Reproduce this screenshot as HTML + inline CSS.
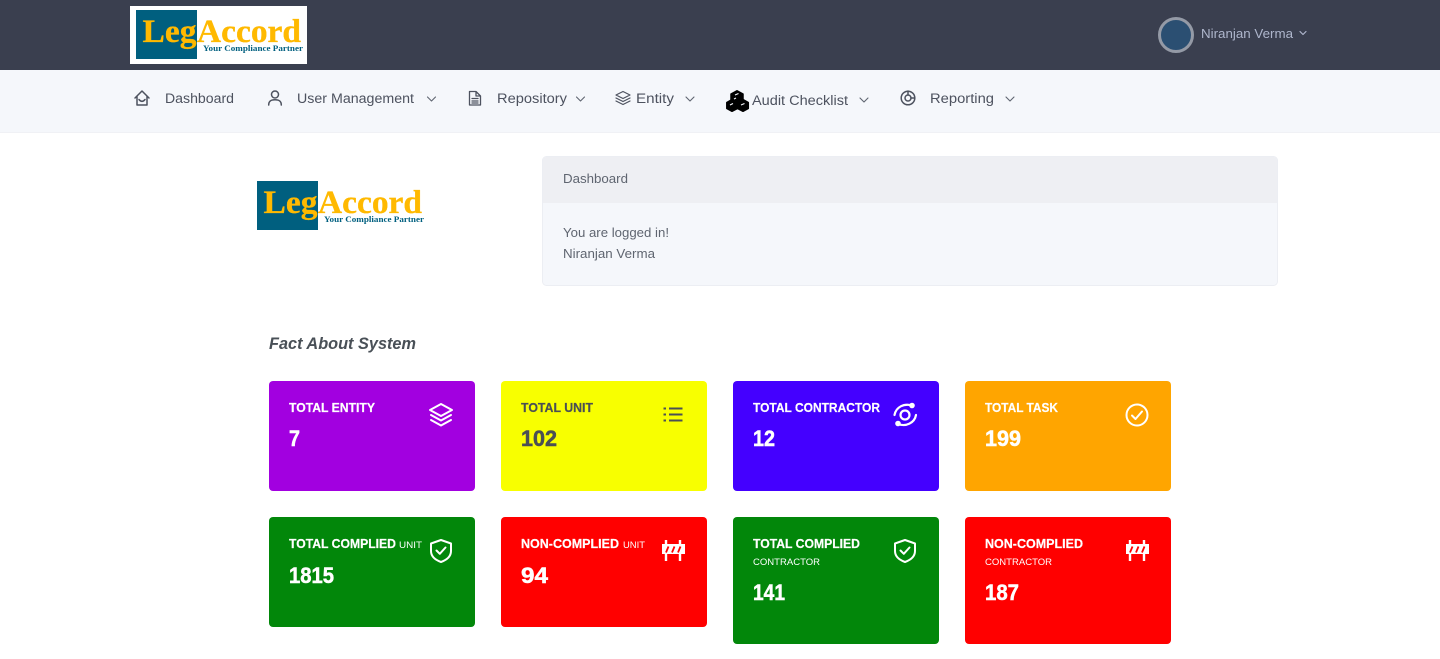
<!DOCTYPE html>
<html lang="en">
<head>
<meta charset="utf-8">
<title>LegAccord Dashboard</title>
<style>
html,body{margin:0;padding:0;background:#fff;width:1440px;height:659px;overflow:hidden}
svg{display:block}
text{font-family:"Liberation Sans",sans-serif}
.nav{font-size:13.5px;fill:#4d525f}
.gray{font-size:13px;fill:#5f6570}
.t{font-size:12.5px;font-weight:700;fill:#fff;stroke:#fff;stroke-width:.2px}
.s{font-size:9.5px;fill:#fff}
.v{font-size:22px;font-weight:700;fill:#fff;stroke:#fff;stroke-width:.5px}
.ic{fill:none;stroke:#fff;stroke-width:2;stroke-linecap:round;stroke-linejoin:round}
.ni{fill:none;stroke:#4d525f;stroke-width:1.5;stroke-linecap:round;stroke-linejoin:round}
.ch{fill:none;stroke:#5f6570;stroke-width:1.1;stroke-linecap:round;stroke-linejoin:round}
.serif{font-family:"Liberation Serif",serif;font-weight:700}
</style>
</head>
<body>
<svg width="1440" height="659" viewBox="0 0 1440 659" xmlns="http://www.w3.org/2000/svg">
  <defs>
    <g id="logo">
      <rect x="0" y="0" width="61" height="49" fill="#005f7f"/>
      <text class="serif" x="6.500" y="32" font-size="33" fill="#ffb900" stroke="#ffb900" stroke-width=".3" textLength="54" lengthAdjust="spacingAndGlyphs">Leg</text>
      <text class="serif" x="61" y="32" font-size="33" fill="#ffb900" stroke="#ffb900" stroke-width=".3" textLength="104" lengthAdjust="spacingAndGlyphs">Accord</text>
      <text class="serif" x="67" y="41" font-size="8.500" fill="#005f7f" textLength="100" lengthAdjust="spacingAndGlyphs">Your Compliance Partner</text>
    </g>
    <g id="shield" class="ic">
      <path d="M10 1 L20 4.500 V12 C20 17.500 15.500 21 10 23 C4.500 21 0 17.500 0 12 V4.500 Z"/>
      <path d="M5.500 11.500 L8.800 14.800 L14.500 8.500"/>
    </g>
    <g id="barrier">
      <path d="M5 0 V21 M19 0 V21" fill="none" stroke="#fff" stroke-width="2.400"/>
      <path d="M1 4 H24 V14 H1 Z" fill="#fff"/>
      <path d="M5 12.500 L7.500 6.500 M11 12.500 L13.500 6.500 M17 12.500 L19.500 6.500" stroke="#ff0000" stroke-width="1.800" fill="none"/>
    </g>
  </defs>

  <!-- Top bar -->
  <rect x="0" y="0" width="1440" height="70" fill="#3a3f4f"/>
  <rect x="130" y="6" width="177" height="58" fill="#fff"/>
  <use href="#logo" x="136" y="10"/>
  <circle cx="1176" cy="35" r="16.500" fill="#2b4f72" stroke="#949aa6" stroke-width="3"/>
  <text x="1201" y="38" font-size="13" fill="#aeb6cc" textLength="92" lengthAdjust="spacingAndGlyphs">Niranjan Verma</text>
  <path d="M1300 31.500 L1303 34.500 L1306 31.500" fill="none" stroke="#aeb6cc" stroke-width="1.200" stroke-linecap="round" stroke-linejoin="round"/>

  <!-- Nav -->
  <rect x="0" y="70" width="1440" height="63" fill="#f5f7fb"/>
  <rect x="0" y="132" width="1440" height="1" fill="#f0f1f5"/>

  <g class="ni">
    <path d="M135 98 L142 91 L149 98 M137 96.500 V105 H147 V96.500"/>
    <path d="M139 99.500 C141 102 143 102 145 99.500"/>
    <circle cx="275" cy="94.500" r="3.500"/>
    <path d="M268.700 105 C268.700 101 271 99.800 275 99.800 C279 99.800 281.300 101 281.300 105"/>
    <path d="M469.500 91.500 H476 L480.500 96 V105 H469.500 Z M476 91.500 V96 H480.500 M472 98.500 H478 M472 101 H478 M472 103 H478" stroke-width="1.300"/>
    <path d="M623 91.500 L630 95 L623 98.500 L616 95 Z M616 98 L623 101.500 L630 98 M616 101 L623 104.500 L630 101" stroke-width="1.200"/>
    <circle cx="908" cy="98" r="6.800"/>
    <circle cx="908" cy="98" r="3"/>
    <path d="M908 91 V95 M911 98 H914.500"/>
  </g>
  <g fill="#000" stroke="#000" stroke-width="1.500" stroke-linejoin="round">
    <path d="M737 90.800 L743 94 V100 L737 103 L731 100 V94 Z"/>
    <path d="M732 99.500 L737.500 102.500 V108.500 L732 111.300 L726.800 108.500 V102.500 Z"/>
    <path d="M743 99.500 L748.300 102.500 V108.500 L743 111.300 L737.500 108.500 V102.500 Z"/>
  </g>
  <g stroke="#f5f7fb" stroke-width="1.200" fill="none">
    <path d="M735 95 L738.500 93.500 M730 105 L733 103.500 M741 105 L744.500 103.500 M734 99 L736 98"/>
  </g>

  <text class="nav" x="165" y="103" textLength="69" lengthAdjust="spacingAndGlyphs">Dashboard</text>
  <text class="nav" x="297" y="103" textLength="117" lengthAdjust="spacingAndGlyphs">User Management</text>
  <text class="nav" x="497" y="103" textLength="70" lengthAdjust="spacingAndGlyphs">Repository</text>
  <text class="nav" x="636" y="103" textLength="38" lengthAdjust="spacingAndGlyphs">Entity</text>
  <text class="nav" x="752" y="105" textLength="96" lengthAdjust="spacingAndGlyphs">Audit Checklist</text>
  <text class="nav" x="930" y="103" textLength="64" lengthAdjust="spacingAndGlyphs">Reporting</text>

  <g class="ch">
    <path d="M427.500 97 L431.500 101 L435.500 97"/>
    <path d="M576.500 97 L580.500 101 L584.500 97"/>
    <path d="M686 97 L690 101 L694 97"/>
    <path d="M860 98 L864 102 L868 98"/>
    <path d="M1006 97 L1010 101 L1014 97"/>
  </g>

  <!-- Second logo -->
  <use href="#logo" x="257" y="181"/>

  <!-- Panel -->
  <rect x="542.500" y="156.500" width="735" height="129" rx="4" fill="#f5f7fb" stroke="#eceef3"/>
  <path d="M543 203 V160 A3.500 3.500 0 0 1 546.500 157 H1273.500 A3.500 3.500 0 0 1 1277 160 V203 Z" fill="#eeeff3"/>
  <text class="gray" x="563" y="183" textLength="65" lengthAdjust="spacingAndGlyphs">Dashboard</text>
  <text class="gray" x="563" y="237" textLength="106" lengthAdjust="spacingAndGlyphs">You are logged in!</text>
  <text class="gray" x="563" y="258" textLength="92" lengthAdjust="spacingAndGlyphs">Niranjan Verma</text>

  <text x="269" y="349" font-size="16.500" font-weight="700" font-style="italic" fill="#495057" textLength="147" lengthAdjust="spacingAndGlyphs">Fact About System</text>

  <!-- Cards row 1 -->
  <rect x="269" y="381" width="206" height="110" rx="4" fill="#a200e0"/>
  <rect x="501" y="381" width="206" height="110" rx="4" fill="#f8ff00"/>
  <rect x="733" y="381" width="206" height="110" rx="4" fill="#4400ff"/>
  <rect x="965" y="381" width="206" height="110" rx="4" fill="#ffa500"/>

  <text class="t" x="289" y="412" textLength="86" lengthAdjust="spacingAndGlyphs">TOTAL ENTITY</text>
  <text class="v" x="289" y="446" textLength="11" lengthAdjust="spacingAndGlyphs">7</text>
  <path class="ic" d="M441 404 L452 410 L441 416 L430 410 Z M431 415 L441 420.500 L451 415 M431 420 L441 425.500 L451 420"/>

  <text class="t" x="521" y="412" textLength="72" lengthAdjust="spacingAndGlyphs" style="fill:#4a4f55;stroke:#4a4f55">TOTAL UNIT</text>
  <text class="v" x="521" y="446" textLength="36" lengthAdjust="spacingAndGlyphs" style="fill:#4a4f55;stroke:#4a4f55">102</text>
  <path d="M669 408.500 H682.500 M669 414.500 H682.500 M669 420.500 H682.500 M663.500 408.500 H666 M663.500 414.500 H666 M663.500 420.500 H666" fill="none" stroke="#4a4f55" stroke-width="2"/>

  <text class="t" x="753" y="412" textLength="127" lengthAdjust="spacingAndGlyphs">TOTAL CONTRACTOR</text>
  <text class="v" x="753" y="446" textLength="22" lengthAdjust="spacingAndGlyphs">12</text>
  <g class="ic" style="stroke-width:2.200">
    <circle cx="905" cy="415" r="4.500"/>
    <path d="M912 405.500 C904 403 896 407 894.500 415"/>
    <path d="M898 424 C906 427 914.500 423 916 415"/>
  </g>
  <circle cx="912" cy="405.500" r="2.800" fill="#fff"/>
  <circle cx="898" cy="423.500" r="2.800" fill="#fff"/>

  <text class="t" x="985" y="412" textLength="73" lengthAdjust="spacingAndGlyphs">TOTAL TASK</text>
  <text class="v" x="985" y="446" textLength="36" lengthAdjust="spacingAndGlyphs">199</text>
  <g class="ic">
    <circle cx="1137" cy="415" r="10.500"/>
    <path d="M1132 415.500 L1135.500 419 L1142 411.500"/>
  </g>

  <!-- Cards row 2 -->
  <rect x="269" y="517" width="206" height="110" rx="4" fill="#02870a"/>
  <rect x="501" y="517" width="206" height="110" rx="4" fill="#ff0000"/>
  <rect x="733" y="517" width="206" height="127" rx="4" fill="#02870a"/>
  <rect x="965" y="517" width="206" height="127" rx="4" fill="#ff0000"/>

  <text class="t" x="289" y="548" textLength="107" lengthAdjust="spacingAndGlyphs">TOTAL COMPLIED</text>
  <text class="s" x="399" y="548" textLength="23" lengthAdjust="spacingAndGlyphs">UNIT</text>
  <text class="v" x="289" y="583" textLength="45" lengthAdjust="spacingAndGlyphs">1815</text>
  <use href="#shield" x="431" y="539"/>

  <text class="t" x="521" y="548" textLength="98" lengthAdjust="spacingAndGlyphs">NON-COMPLIED</text>
  <text class="s" x="623" y="548" textLength="22" lengthAdjust="spacingAndGlyphs">UNIT</text>
  <text class="v" x="521" y="583" textLength="27" lengthAdjust="spacingAndGlyphs">94</text>
  <use href="#barrier" x="661" y="540"/>

  <text class="t" x="753" y="548" textLength="107" lengthAdjust="spacingAndGlyphs">TOTAL COMPLIED</text>
  <text class="s" x="753" y="565" textLength="67" lengthAdjust="spacingAndGlyphs">CONTRACTOR</text>
  <text class="v" x="753" y="600" textLength="32" lengthAdjust="spacingAndGlyphs">141</text>
  <use href="#shield" x="895" y="539"/>

  <text class="t" x="985" y="548" textLength="98" lengthAdjust="spacingAndGlyphs">NON-COMPLIED</text>
  <text class="s" x="985" y="565" textLength="67" lengthAdjust="spacingAndGlyphs">CONTRACTOR</text>
  <text class="v" x="985" y="600" textLength="34" lengthAdjust="spacingAndGlyphs">187</text>
  <use href="#barrier" x="1125" y="540"/>
</svg>
</body>
</html>
